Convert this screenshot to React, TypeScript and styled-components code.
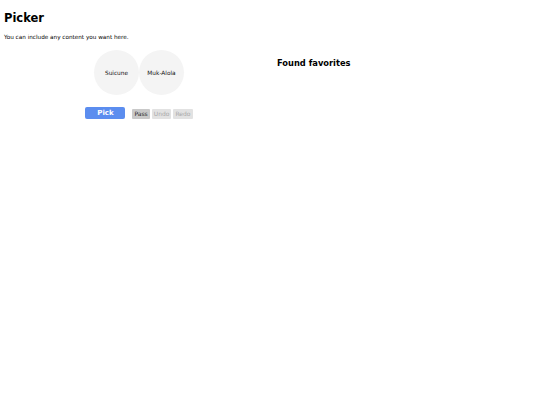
import styled, { createGlobalStyle } from "styled-components";

const GlobalStyle = createGlobalStyle`
  body {
    margin: 0;
    background: #ffffff;
    font-family: "DejaVu Sans", Verdana, sans-serif;
    color: #000000;
  }
`;

const Page = styled.div`
  padding: 0 4px;
`;

const Title = styled.h1`
  font-size: 11.5px;
  font-weight: 700;
  margin: 11px 0 0;
  line-height: 15px;
`;

const Intro = styled.p`
  font-size: 5.7px;
  margin: 7px 0 0;
  line-height: 8px;
`;

const Columns = styled.div`
  display: flex;
  margin-top: 5px;
`;

const PickerColumn = styled.div`
  width: 270px;
  display: flex;
  flex-direction: column;
  align-items: center;
`;

const Candidates = styled.div`
  display: flex;
  margin-top: 4px;
`;

const Candidate = styled.div`
  width: 45px;
  height: 45px;
  border-radius: 50%;
  background: #f4f4f4;
  display: flex;
  align-items: center;
  justify-content: center;
  font-size: 5.8px;
  color: #111111;
`;

const Controls = styled.div`
  display: flex;
  align-items: center;
  gap: 7px;
  margin-top: 12px;
`;

const PickButton = styled.button`
  width: 40px;
  height: 12px;
  border: none;
  border-radius: 2px;
  background: #5b8def;
  color: #ffffff;
  font-family: inherit;
  font-size: 7px;
  font-weight: 700;
  padding: 0;
  line-height: 12px;
`;

const History = styled.div`
  display: flex;
  gap: 2px;
  margin-top: 2px;
`;

const SmallButton = styled.button<{ $active?: boolean }>`
  height: 10px;
  padding: 0 2px;
  border: none;
  border-radius: 1px;
  background: ${(p) => (p.$active ? "#c9c9c9" : "#e2e2e2")};
  color: ${(p) => (p.$active ? "#222222" : "#a9a9a9")};
  font-family: inherit;
  font-size: 6px;
  line-height: 10px;
`;

const FavoritesColumn = styled.div`
  padding-left: 3px;
`;

const FavoritesTitle = styled.h3`
  font-size: 8.3px;
  font-weight: 700;
  margin: 11px 0 0;
  line-height: 12px;
`;

export default function App() {
  const candidates = ["Suicune", "Muk-Alola"];

  return (
    <Page>
      <GlobalStyle />
      <Title>Picker</Title>
      <Intro>You can include any content you want here.</Intro>
      <Columns>
        <PickerColumn>
          <Candidates>
            {candidates.map((name) => (
              <Candidate key={name}>{name}</Candidate>
            ))}
          </Candidates>
          <Controls>
            <PickButton>Pick</PickButton>
            <History>
              <SmallButton $active>Pass</SmallButton>
              <SmallButton disabled>Undo</SmallButton>
              <SmallButton disabled>Redo</SmallButton>
            </History>
          </Controls>
        </PickerColumn>
        <FavoritesColumn>
          <FavoritesTitle>Found favorites</FavoritesTitle>
        </FavoritesColumn>
      </Columns>
    </Page>
  );
}
